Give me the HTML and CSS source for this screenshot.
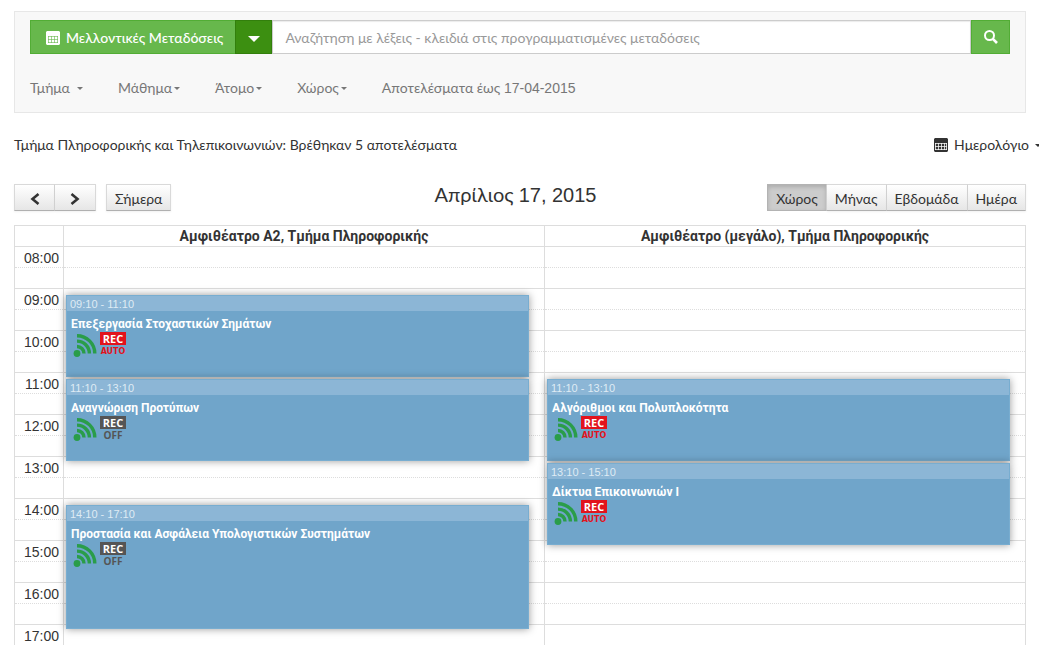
FILE: index.html
```html
<!DOCTYPE html>
<html lang="el">
<head>
<meta charset="utf-8">
<title>Μελλοντικές Μεταδόσεις</title>
<link rel="stylesheet" href="styles.css">
</head>
<body>
<svg class="sprite" aria-hidden="true">
  <symbol id="calendar" viewBox="0 0 14 14">
    <path fill="currentColor" d="M1 0h12l1 1v12l-1 1H1l-1-1V1z"/>
    <path fill="none" stroke="#fff" stroke-opacity=".75" d="M1 5.500h12M1 8.500h12M1 11.500h12M1.500 5v7M4.500 5v7M7.500 5v7M10.500 5v7M12.500 5v7"/>
  </symbol>
  <symbol id="calendar-solid" viewBox="0 0 14 14">
    <path fill="#fff" d="M1 0h12l1 1v12l-1 1H1l-1-1V1z"/>
    <path stroke="#67b84c" stroke-opacity=".6" fill="none" d="M2 5.500h10M2 8.500h10M2 11.500h10M2.500 5v7M5.500 5v7M8.500 5v7M11.500 5v7"/>
  </symbol>
  <symbol id="feed" viewBox="0 0 24 24">
    <circle cx="4" cy="21" r="3.400" fill="#2a9d49"/>
    <path fill="none" stroke="#2a9d49" stroke-width="3.400" d="M4 14a7 7 0 0 1 7 7M4 8.600a12.400 12.400 0 0 1 12.400 12.400M4 3.200a17.800 17.800 0 0 1 17.800 17.800"/>
  </symbol>
</svg>

<form class="panel">
  <div class="search">
    <button type="button" class="mode"><svg class="cal-icon"><use href="#calendar-solid"/></svg>Μελλοντικές Μεταδόσεις</button>
    <button type="button" class="mode-toggle" aria-label="Επιλογή μεταδόσεων"><svg width="12" height="6" viewBox="0 0 12 6"><path fill="#fff" d="M0 0h12L6 6z"/></svg></button>
    <input class="query" type="text" aria-label="Αναζήτηση" placeholder="Αναζήτηση με λέξεις - κλειδιά στις προγραμματισμένες μεταδόσεις">
    <button class="go" aria-label="Αναζήτηση"><svg width="14" height="14" viewBox="0 0 14 14" fill="none" stroke="#fff"><circle cx="5.500" cy="5.500" r="4.500" stroke-width="2"/><path stroke-width="2.600" d="M8.800 8.800l4.200 4.200"/></svg></button>
  </div>
  <div class="filters">
    <button type="button" class="filter wide">Τμήμα<i class="caret"></i></button>
    <button type="button" class="filter">Μάθημα<i class="caret"></i></button>
    <button type="button" class="filter">Άτομο<i class="caret"></i></button>
    <button type="button" class="filter">Χώρος<i class="caret"></i></button>
    <span>Αποτελέσματα έως <span class="num">17-04-2015</span></span>
  </div>
</form>

<div class="summary">
  <span>Τμήμα Πληροφορικής και Τηλεπικοινωνιών: Βρέθηκαν 5 αποτελέσματα</span>
  <button type="button" class="view"><svg class="cal-icon"><use href="#calendar"/></svg>Ημερολόγιο<i class="caret"></i></button>
</div>

<header class="toolbar">
  <div class="nav">
    <div class="group">
      <button type="button" class="btn arrow" aria-label="Προηγούμενη"><svg width="10" height="12" viewBox="0 0 10 12"><path d="M8.500 1L2.500 6l6 5"/></svg></button>
      <button type="button" class="btn arrow" aria-label="Επόμενη"><svg width="10" height="12" viewBox="0 0 10 12"><path d="M1.500 1l6 5-6 5"/></svg></button>
    </div>
    <button type="button" class="btn">Σήμερα</button>
  </div>
  <h1 class="date">Απρίλιος <span class="num">17, 2015</span></h1>
  <div class="group views">
    <button type="button" class="btn active">Χώρος</button>
    <button type="button" class="btn">Μήνας</button>
    <button type="button" class="btn">Εβδομάδα</button>
    <button type="button" class="btn">Ημέρα</button>
  </div>
</header>

<main class="calendar">
  <table class="slots">
    <colgroup><col class="axis"><col><col></colgroup>
    <thead><tr><td></td><th scope="col">Αμφιθέατρο Α2, Τμήμα Πληροφορικής</th><th scope="col">Αμφιθέατρο (μεγάλο), Τμήμα Πληροφορικής</th></tr></thead>
    <tbody>
      <tr><th scope="row">08:00</th><td></td><td></td></tr>
      <tr class="half"><td></td><td></td><td></td></tr>
      <tr><th scope="row">09:00</th><td></td><td></td></tr>
      <tr class="half"><td></td><td></td><td></td></tr>
      <tr><th scope="row">10:00</th><td></td><td></td></tr>
      <tr class="half"><td></td><td></td><td></td></tr>
      <tr><th scope="row">11:00</th><td></td><td></td></tr>
      <tr class="half"><td></td><td></td><td></td></tr>
      <tr><th scope="row">12:00</th><td></td><td></td></tr>
      <tr class="half"><td></td><td></td><td></td></tr>
      <tr><th scope="row">13:00</th><td></td><td></td></tr>
      <tr class="half"><td></td><td></td><td></td></tr>
      <tr><th scope="row">14:00</th><td></td><td></td></tr>
      <tr class="half"><td></td><td></td><td></td></tr>
      <tr><th scope="row">15:00</th><td></td><td></td></tr>
      <tr class="half"><td></td><td></td><td></td></tr>
      <tr><th scope="row">16:00</th><td></td><td></td></tr>
      <tr class="half"><td></td><td></td><td></td></tr>
      <tr><th scope="row">17:00</th><td></td><td></td></tr>
    </tbody>
  </table>
  <div class="events">
    <div class="room">
      <article class="event" style="top:48px;height:82px">
        <div class="time">09:10 - 11:10</div><h2>Επεξεργασία Στοχαστικών Σημάτων</h2>
        <div class="status"><svg class="feed"><use href="#feed"/></svg><div class="rec auto"><b>REC</b><span>AUTO</span></div></div>
      </article>
      <article class="event" style="top:132px;height:82px">
        <div class="time">11:10 - 13:10</div><h2>Αναγνώριση Προτύπων</h2>
        <div class="status"><svg class="feed"><use href="#feed"/></svg><div class="rec off"><b>REC</b><span>OFF</span></div></div>
      </article>
      <article class="event" style="top:258px;height:124px">
        <div class="time">14:10 - 17:10</div><h2>Προστασία και Ασφάλεια Υπολογιστικών Συστημάτων</h2>
        <div class="status"><svg class="feed"><use href="#feed"/></svg><div class="rec off"><b>REC</b><span>OFF</span></div></div>
      </article>
    </div>
    <div class="room">
      <article class="event" style="top:132px;height:82px">
        <div class="time">11:10 - 13:10</div><h2>Αλγόριθμοι και Πολυπλοκότητα</h2>
        <div class="status"><svg class="feed"><use href="#feed"/></svg><div class="rec auto"><b>REC</b><span>AUTO</span></div></div>
      </article>
      <article class="event" style="top:216px;height:82px">
        <div class="time">13:10 - 15:10</div><h2>Δίκτυα Επικοινωνιών Ι</h2>
        <div class="status"><svg class="feed"><use href="#feed"/></svg><div class="rec auto"><b>REC</b><span>AUTO</span></div></div>
      </article>
    </div>
  </div>
</main>
</body>
</html>
```
FILE: styles.css
```css
* { box-sizing: border-box; }
html { overflow-x: hidden; }
body {
  margin: 0;
  padding: 11px 13px 0 14px;
  overflow-x: hidden;
  background: #fff;
  color: #333;
  font: 14px/20px Lato, "Liberation Sans", sans-serif;
}
button, input { font: inherit; color: inherit; margin: 0; border-radius: 0; }
button { padding: 0; border: 0; background: none; white-space: nowrap; cursor: pointer; }
svg { display: block; flex: none; }
.sprite { position: absolute; width: 0; height: 0; }
.num { font-family: "Liberation Sans", sans-serif; }
.cal-icon { width: 14px; height: 14px; }
.caret {
  border: 3px solid transparent;
  border-top-color: currentColor;
  border-bottom: 0;
}

.panel { padding: 8px 15px 14px; border: 1px solid #e7e7e7; background: #f8f8f8; }
.search { display: flex; height: 34px; }
.mode {
  display: flex; align-items: center; gap: 6px;
  padding: 2px 12px 0 15px;
  border: 1px solid #52ad35; border-right: 0;
  background: #67b84c; color: #fff; font-weight: 500;
}
.mode-toggle {
  display: flex; align-items: center; justify-content: center;
  width: 37px; padding-top: 3px; border: 1px solid #327f0c; background: #3c8f11;
}
.query {
  flex: 1; min-width: 0; padding: 2px 12px 0;
  border: 1px solid #ccc; background: #fff;
  box-shadow: inset 0 1px 1px rgba(0, 0, 0, .08);
}
.query::placeholder { color: #999; opacity: 1; }
.go {
  display: flex; align-items: center; justify-content: center;
  width: 39px; border: 1px solid #52ad35; background: #67b84c;
}
.filters { display: flex; gap: 35px; margin-top: 24px; color: #777; }
.filter { display: flex; align-items: center; gap: 2px; }
.filter.wide { gap: 7px; }

.summary { display: flex; justify-content: space-between; margin: 22px -15px 0 0; }
.view { display: flex; align-items: center; gap: 6px; }

.toolbar {
  display: grid; grid-template-columns: 1fr auto 1fr;
  margin-top: 29px;
}
.nav { display: flex; gap: 10px; }
.group { display: flex; }
.views { justify-content: flex-end; }
.date { margin: 0; padding-right: 9px; font-size: 20px; line-height: 20px; font-weight: 400; }
.btn {
  display: flex; align-items: center; justify-content: center;
  height: 27px; padding: 2px 8px 0;
  border: 1px solid #d9d9d9; border-bottom-color: #b0b0b0;
  background: linear-gradient(#fff, #e6e6e6);
  box-shadow: 0 1px 2px rgba(0, 0, 0, .06);
}
.group .btn + .btn { border-left-width: 0; }
.group .btn:not(:last-child) { border-right-color: #d4d4d4; }
.btn.active {
  border-color: #b3b3b3; background: #ccc;
  box-shadow: inset 0 2px 4px rgba(0, 0, 0, .16);
}
.arrow { width: 41px; }
.arrow path { fill: none; stroke: #333; stroke-width: 2.600; }

.calendar { position: relative; margin-top: 14px; }
.slots { width: 100%; table-layout: fixed; border-collapse: collapse; }
.axis { width: 49px; }
.slots th, .slots td { height: 21px; padding: 0; border: 1px solid #ddd; line-height: 20px; }
.slots thead th { font-family: Roboto, sans-serif; font-weight: 700; }
.slots tbody th {
  padding: 2px 4px 0 0; text-align: right; font-weight: 400; line-height: 18px;
  font-family: "Liberation Sans", sans-serif;
}
.slots tbody tr:not(.half) > * { border-bottom: 0; }
.slots .half td { border-top-style: dotted; }

.events {
  position: absolute; top: 22px; bottom: 0; left: 50px; right: 0;
  display: grid; grid-template-columns: 1fr 1fr;
}
.room { position: relative; }
.event {
  position: absolute; left: 2px; right: 16px;
  border: 1px solid #78add0; background: #70a5ca; color: #fff;
  box-shadow: 0 0 8px rgba(0, 0, 0, .4);
}
.time {
  height: 15px; padding-left: 3px;
  background: #8cb6d6; color: #dfebf4;
  font: 11px/17px "Liberation Sans", sans-serif;
}
.event h2 { margin: 5px 0 0 4px; font: 700 12px/16px Roboto, sans-serif; }
.status { display: flex; gap: 3px; padding-left: 6px; }
.feed { width: 24px; height: 25px; }
.rec { display: flex; flex-direction: column; align-items: center; width: 26px; }
.rec b { width: 100%; text-align: center; color: #fff; font: 700 11px/13px "Open Sans", sans-serif; }
.auto b { background: #e2131c; }
.off b { background: #555; }
.auto span { color: #e2131c; font: 700 8px/14px "DejaVu Sans", sans-serif; }
.off span { color: #555; font: 700 10px/13px "Open Sans", sans-serif; }
```
